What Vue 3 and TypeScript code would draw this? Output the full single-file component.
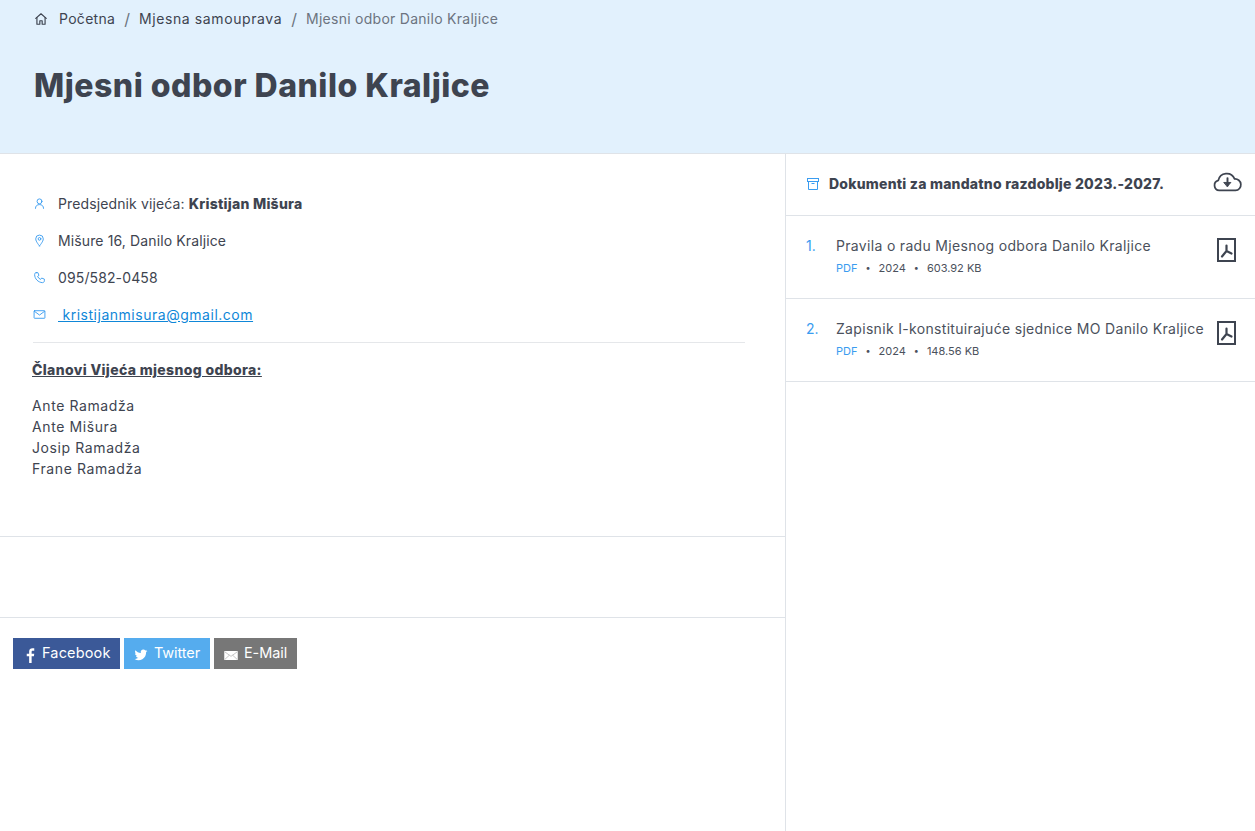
<script setup lang="ts">
const contacts = [
  { key: 'user', label: 'Predsjednik vijeća: ', strong: 'Kristijan Mišura' },
  { key: 'pin', label: 'Mišure 16, Danilo Kraljice' },
  { key: 'phone', label: '095/582-0458' },
]
const members = ['Ante Ramadža', 'Ante Mišura', 'Josip Ramadža', 'Frane Ramadža']
const docs = [
  { n: '1.', title: 'Pravila o radu Mjesnog odbora Danilo Kraljice', year: '2024', size: '603.92 KB' },
  { n: '2.', title: 'Zapisnik I-konstituirajuće sjednice MO Danilo Kraljice', year: '2024', size: '148.56 KB' },
]
</script>

<template>
  <div class="page">
    <header class="hero">
      <nav class="crumbs">
        <svg class="home" viewBox="0 0 24 24" fill="none" stroke="#3e4450" stroke-width="2" stroke-linecap="round" stroke-linejoin="round">
          <path d="M3 11 12 3l9 8" /><path d="M5 9.500V21h5v-6h4v6h5V9.500" />
        </svg>
        <a class="crumb first">Početna</a>
        <span class="sep">/</span>
        <a class="crumb mid">Mjesna samouprava</a>
        <span class="sep">/</span>
        <span class="crumb current">Mjesni odbor Danilo Kraljice</span>
      </nav>
      <h1>Mjesni odbor Danilo Kraljice</h1>
    </header>

    <main class="columns">
      <section class="left">
        <div class="info">
          <ul class="contacts">
            <li v-for="c in contacts" :key="c.key">
              <svg class="ci" viewBox="0 0 24 24" fill="none" stroke="#3a9cf0" stroke-width="1.700" stroke-linecap="round" stroke-linejoin="round">
                <template v-if="c.key === 'user'">
                  <circle cx="12" cy="8" r="4.500" /><path d="M4.500 21c0-4.500 3-7 7.500-7s7.500 2.500 7.500 7" />
                </template>
                <template v-else-if="c.key === 'pin'">
                  <path d="M12 22s-7-8-7-13a7 7 0 0 1 14 0c0 5-7 13-7 13z" /><circle cx="12" cy="9" r="2.500" />
                </template>
                <template v-else>
                  <path d="M6 3 9 3l2 5-2.500 2c1 2.500 3 4.500 5.500 5.500l2-2.500 5 2v3c0 2-1.500 3.500-3.500 3.500C9.500 21 3 14.500 3 6.500 3 4.500 4 3 6 3z" />
                </template>
              </svg>
              <span>{{ c.label }}<strong v-if="c.strong">{{ c.strong }}</strong></span>
            </li>
            <li>
              <svg class="ci" viewBox="0 0 24 24" fill="none" stroke="#3a9cf0" stroke-width="1.700" stroke-linecap="round" stroke-linejoin="round">
                <rect x="2" y="5" width="20" height="14" rx="1" /><path d="m2.500 6 9.500 7 9.500-7" />
              </svg>
              <a class="mail">&nbsp;kristijanmisura@gmail.com</a>
            </li>
          </ul>
          <div class="members">
            <p class="mtitle">Članovi Vijeća mjesnog odbora:</p>
            <p class="mlist"><template v-for="m in members" :key="m">{{ m }}<br /></template></p>
          </div>
        </div>
        <div class="spacer"></div>
        <div class="share">
          <a class="btn fb">
            <svg class="bi fbi" viewBox="0 0 12 20" fill="#fff"><path d="M7.500 20V11h3l.5-3.500H7.500V5.300c0-1 .3-1.700 1.800-1.700H11V.4C10.700.3 9.700.2 8.500.2 6 .2 4.200 1.700 4.200 4.600v2.900H1V11h3.200v9z" /></svg>
            Facebook
          </a>
          <a class="btn tw">
            <svg class="bi twi" viewBox="0 0 24 24" fill="#fff"><path d="M23 5c-.8.4-1.700.6-2.600.7.900-.6 1.600-1.400 2-2.500-.9.500-1.800.9-2.900 1.100A4.500 4.500 0 0 0 11.700 8.500C8 8.300 4.600 6.500 2.400 3.800c-1.200 2-.6 4.700 1.400 6-.7 0-1.400-.2-2-.6 0 2.200 1.500 4.100 3.600 4.500-.7.200-1.400.2-2 .1.600 1.800 2.300 3.100 4.200 3.100A9.100 9.100 0 0 1 1 18.800 12.800 12.800 0 0 0 20.700 7.400c.9-.6 1.700-1.400 2.300-2.400z" /></svg>
            Twitter
          </a>
          <a class="btn em">
            <svg class="bi emi" viewBox="0 0 24 16"><rect width="24" height="16" rx="1" fill="#fff" /><path d="m1 1.500 11 8 11-8M1 15l8-7.500M23 15l-8-7.500" fill="none" stroke="#999" stroke-width="1" /></svg>
            E-Mail
          </a>
        </div>
      </section>

      <aside class="right">
        <div class="rhead">
          <svg class="box" viewBox="0 0 12 12" fill="none" stroke="#3a9cf0" stroke-width="1">
            <rect x=".5" y=".5" width="11" height="3" /><path d="M1.500 3.500v8h9v-8M4.500 5.500h3" />
          </svg>
          <h2>Dokumenti za mandatno razdoblje 2023.-2027.</h2>
          <svg class="cloud" viewBox="0 0 30 21" fill="none" stroke="#3e4450" stroke-width="1.800" stroke-linecap="round" stroke-linejoin="round">
            <path d="M8 19.800H6.500A5.300 5.300 0 0 1 5.500 9.400 8.800 8.800 0 0 1 22.300 7.800a6 6 0 0 1 1 12H8z" />
            <path d="M15 7v8" stroke-width="2" /><path d="M11.500 11.500h7L15 15.500z" fill="#3e4450" stroke-width="1" />
          </svg>
        </div>
        <article v-for="d in docs" :key="d.n" class="doc">
          <span class="num">{{ d.n }}</span>
          <div class="body">
            <a class="dtitle">{{ d.title }}</a>
            <div class="meta">
              <span class="pdf">PDF</span><i>•</i><span>{{ d.year }}</span><i>•</i><span>{{ d.size }}</span>
            </div>
          </div>
          <svg class="file" viewBox="0 0 19 24" fill="none" stroke="#3e4450">
            <rect x="1" y="1" width="17" height="22" stroke-width="2" />
            <path d="M9.500 7.500v5.500L5 18.500M9.500 13l5 2.500" stroke-width="2.200" stroke-linecap="round" stroke-linejoin="round" />
          </svg>
        </article>
      </aside>
    </main>
  </div>
</template>

<style scoped>
.page {
  min-height: 831px;
  display: flex;
  flex-direction: column;
  font-family: Inter, "Noto Sans", sans-serif;
  font-size: 14px;
  color: #3e4450;
  background: #fff;
}
.hero {
  height: 153px;
  background: #e2f1fd;
  border-bottom: 1px solid #dfe3e8;
  padding: 0 33px;
}
.crumbs {
  display: flex;
  align-items: center;
  height: 37px;
  font-size: 14px;
}
.home { width: 14px; height: 14px; margin-right: 11px; margin-left: 1px; }
.crumb { color: #3e4450; }
.first { letter-spacing: 0.3px; }
.mid { letter-spacing: 0.6px; }
.crumb.current { color: #6c7480; letter-spacing: 0.27px; }
.sep { margin: 0 9px; color: #6c7480; font-size: 16px; }
h1 {
  margin: 28px 0 0 1px;
  font-size: 32px;
  line-height: 42px;
  font-weight: 800;
  color: #3e4450;
  letter-spacing: 0.5px;
}
.columns { flex: 1; display: flex; }
.left { width: 785px; flex: none; }
.right { flex: 1; border-left: 1px solid #dfe3e8; }
.info { height: 383px; box-sizing: border-box; padding: 31px 40px 0 33px; border-bottom: 1px solid #dfe3e8; }
.contacts { list-style: none; margin: 0; padding: 0 0 9px; border-bottom: 1px solid #e5e7ea; letter-spacing: 0.12px; }
.contacts li { display: flex; align-items: center; height: 37px; }
.ci { width: 13px; height: 13px; margin-right: 12px; flex: none; }
strong { font-weight: 800; letter-spacing: 0.25px; }
.mail { color: #0f87d8; text-decoration: underline; letter-spacing: 0.52px; }
.members { margin-left: -1px; }
.mtitle { margin: 16px 0 0; line-height: 21px; font-weight: 800; text-decoration: underline; letter-spacing: 0.35px; }
.mlist { margin: 15px 0 0; line-height: 21px; letter-spacing: 0.6px; }
.spacer { height: 80px; border-bottom: 1px solid #dfe3e8; }
.share { display: flex; gap: 4px; padding: 20px 13px 0; }
.btn {
  display: flex;
  align-items: center;
  height: 31px;
  color: #fff;
  font-size: 14.500px;
  box-sizing: border-box;
  padding-bottom: 2px;
}
.fb { background: #3b5998; width: 107px; padding-left: 13px; letter-spacing: 0.15px; }
.tw { background: #55acee; width: 86px; padding-left: 10px; letter-spacing: -0.1px; }
.em { background: #777; width: 83px; padding-left: 10px; letter-spacing: -0.1px; }
.bi { flex: none; }
.fbi { width: 9px; height: 15px; margin-right: 7px; margin-top: 5px; }
.twi { width: 14px; height: 14px; margin-right: 6px; margin-top: 4px; }
.emi { width: 14px; height: 9px; margin-right: 6px; margin-top: 5px; }
.rhead {
  height: 62px;
  box-sizing: border-box;
  display: flex;
  align-items: center;
  padding: 0 13px 2px 21px;
  border-bottom: 1px solid #dfe3e8;
}
.box { width: 12px; height: 12px; margin-right: 10px; flex: none; }
h2 { flex: 1; margin: 0; font-size: 14px; font-weight: 800; color: #3e4450; letter-spacing: 0.22px; }
.cloud { width: 29px; height: 21px; margin-top: -5px; }
.doc {
  height: 83px;
  box-sizing: border-box;
  display: flex;
  padding: 19px 19px 0 20px;
  border-bottom: 1px solid #dfe3e8;
}
.num { width: 30px; flex: none; color: #3a9cf0; line-height: 21px; }
.body { flex: 1; min-width: 0; }
.dtitle { display: block; line-height: 21px; color: #4b515c; white-space: nowrap; letter-spacing: 0.32px; }
.meta { display: flex; align-items: center; font-size: 11px; line-height: 16px; margin-top: 4px; color: #4b515c; }
.meta i { font-style: normal; margin: 0 8px; font-size: 9px; }
.pdf { color: #3a9cf0; }
.file { width: 19px; height: 24px; flex: none; margin-top: 3px; }
</style>
